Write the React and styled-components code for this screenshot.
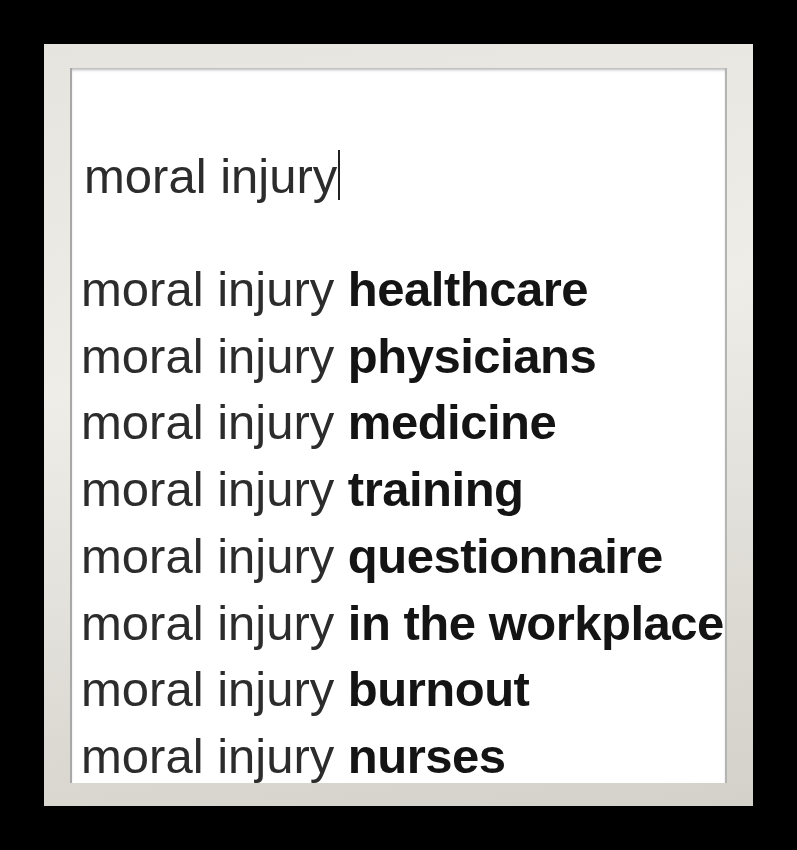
import styled, { createGlobalStyle } from "styled-components"

const GlobalStyle = createGlobalStyle`
  html, body {
    margin: 0;
    padding: 0;
    background: #000;
  }
`

const Page = styled.div`
  width: 797px;
  height: 850px;
  box-sizing: border-box;
  padding: 44px;
  background: #000;
  font-family: "Liberation Sans", Arial, sans-serif;
`

const Frame = styled.div`
  width: 709px;
  height: 762px;
  box-sizing: border-box;
  padding: 24px 26px 23px 26px;
  background: linear-gradient(170deg, #e6e4df 0%, #eeede8 40%, #dcd9d3 80%, #d4d1ca 100%);
  display: flex;
`

const Panel = styled.div`
  flex: 1;
  background: #fff;
  overflow: hidden;
  border-left: 2px solid #a8a8a8;
  border-right: 2px solid #b4b4b4;
  box-shadow: inset 0 3px 3px -1px rgba(0, 0, 0, 0.28);
  display: flex;
  flex-flow: column;
`

const SearchBox = styled.div`
  padding: 78px 0 0 12px;
  font-size: 49px;
  line-height: 60px;
  color: #2c2c2c;
  white-space: nowrap;
`

const Caret = styled.span`
  display: inline-block;
  width: 2px;
  height: 50px;
  background: #222;
  vertical-align: -7px;
  margin-left: 1px;
`

const Separator = styled.div`
  width: 266px;
  height: 1px;
  margin: 39px 0 0 16px;
  background: #eeeeee;
`

const Suggestions = styled.ul`
  list-style: none;
  margin: 11px 0 0 0;
  padding: 0 0 0 9px;
`

const Suggestion = styled.li`
  font-size: 49px;
  line-height: 66.7px;
  color: #2c2c2c;
  white-space: nowrap;

  b {
    color: #141414;
    font-weight: bold;
    letter-spacing: -0.5px;
  }
`

const suggestions = [
  "healthcare",
  "physicians",
  "medicine",
  "training",
  "questionnaire",
  "in the workplace",
  "burnout",
  "nurses",
]

function App() {
  return (
    <Page>
      <GlobalStyle />
      <Frame>
        <Panel>
          <SearchBox>
            moral injury<Caret />
          </SearchBox>
          <Separator />
          <Suggestions>
            {suggestions.map((s) => (
              <Suggestion key={s}>
                moral injury <b>{s}</b>
              </Suggestion>
            ))}
          </Suggestions>
        </Panel>
      </Frame>
    </Page>
  )
}

export default App
